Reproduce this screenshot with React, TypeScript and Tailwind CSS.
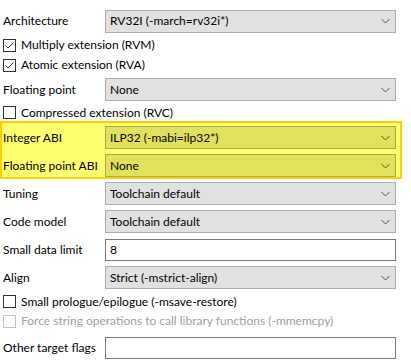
import React from "react";

const Chevron = () => (
  <svg width="9" height="6" viewBox="0 0 9 6" className="shrink-0">
    <polyline points="0.5,1 4.5,5 8.5,1" fill="none" stroke="#555" strokeWidth="1" />
  </svg>
);

const Select = ({ value, hl }: { value: string; hl?: boolean }) => (
  <div
    className={
      "flex items-center justify-between h-[23px] w-[291px] border pl-[4px] pr-[5px] " +
      (hl ? "bg-[#e1e15c] border-[#a8a84e]" : "bg-[#e1e1e1] border-[#adadad]")
    }
  >
    <span className="whitespace-nowrap">{value}</span>
    <Chevron />
  </div>
);

const Input = ({ value }: { value: string }) => (
  <div className="flex items-center h-[22px] w-[291px] border border-[#7a7a7a] bg-white pl-[4px]">
    <span>{value}</span>
  </div>
);

const Check = ({ checked, disabled }: { checked?: boolean; disabled?: boolean }) => (
  <div
    className={
      "w-[13px] h-[13px] border bg-white shrink-0 flex items-center justify-center " +
      (disabled ? "border-[#c4c4c4]" : "border-[#333333]")
    }
  >
    {checked && (
      <svg width="11" height="11" viewBox="0 0 11 11">
        <polyline points="1.5,5.5 4,8 9.5,2.5" fill="none" stroke="#333" strokeWidth="1" />
      </svg>
    )}
  </div>
);

const SelRow = ({ label, value, hl, h = "h-[28px]" }: { label: string; value: string; hl?: boolean; h?: string }) => (
  <div className={"flex items-center " + h}>
    <div className="w-[102px] shrink-0">{label}</div>
    <Select value={value} hl={hl} />
  </div>
);

const CheckRow = ({ label, checked, disabled, h }: { label: string; checked?: boolean; disabled?: boolean; h: string }) => (
  <div className={"flex items-center gap-[5px] " + h}>
    <Check checked={checked} disabled={disabled} />
    <span className={"whitespace-nowrap " + (disabled ? "text-[#a0a0a0]" : "")}>{label}</span>
  </div>
);

export default function App() {
  return (
    <div
      className="w-[411px] h-[363px] bg-white text-black text-[12px] leading-none pl-[3px] pt-[7px] overflow-hidden"
      style={{ fontFamily: "'Segoe UI', Lato, 'Noto Sans', sans-serif" }}
    >
      <SelRow label="Architecture" value="RV32I (-march=rv32i*)" />
      <CheckRow label="Multiply extension (RVM)" checked h="h-[20px]" />
      <CheckRow label="Atomic extension (RVA)" checked h="h-[20px]" />
      <SelRow label="Floating point" value="None" h="h-[29px]" />
      <CheckRow label="Compressed extension (RVC)" h="h-[17px]" />
      <div className="ml-[-3px] w-[402px] h-[58px] border-2 border-[#ffd000] bg-[#ffff70] pl-[1px] pt-[3px] flex flex-col gap-[5px]">
        <div className="flex items-center h-[23px]">
          <div className="w-[102px] shrink-0">Integer ABI</div>
          <Select value="ILP32 (-mabi=ilp32*)" hl />
        </div>
        <div className="flex items-center h-[23px]">
          <div className="w-[102px] shrink-0">Floating point ABI</div>
          <Select value="None" hl />
        </div>
      </div>
      <div className="pt-[3px] flex flex-col gap-[5px]">
        <div className="flex items-center h-[23px]">
          <div className="w-[102px] shrink-0">Tuning</div>
          <Select value="Toolchain default" />
        </div>
        <div className="flex items-center h-[23px]">
          <div className="w-[102px] shrink-0">Code model</div>
          <Select value="Toolchain default" />
        </div>
        <div className="flex items-center h-[23px]">
          <div className="w-[102px] shrink-0">Small data limit</div>
          <Input value="8" />
        </div>
        <div className="flex items-center h-[23px]">
          <div className="w-[102px] shrink-0">Align</div>
          <Select value="Strict (-mstrict-align)" />
        </div>
      </div>
      <CheckRow label="Small prologue/epilogue (-msave-restore)" h="h-[25px]" />
      <CheckRow label="Force string operations to call library functions (-mmemcpy)" disabled h="h-[14px]" />
      <div className="flex items-center h-[28px] mt-[6px]">
        <div className="w-[102px] shrink-0">Other target flags</div>
        <Input value="" />
      </div>
    </div>
  );
}
